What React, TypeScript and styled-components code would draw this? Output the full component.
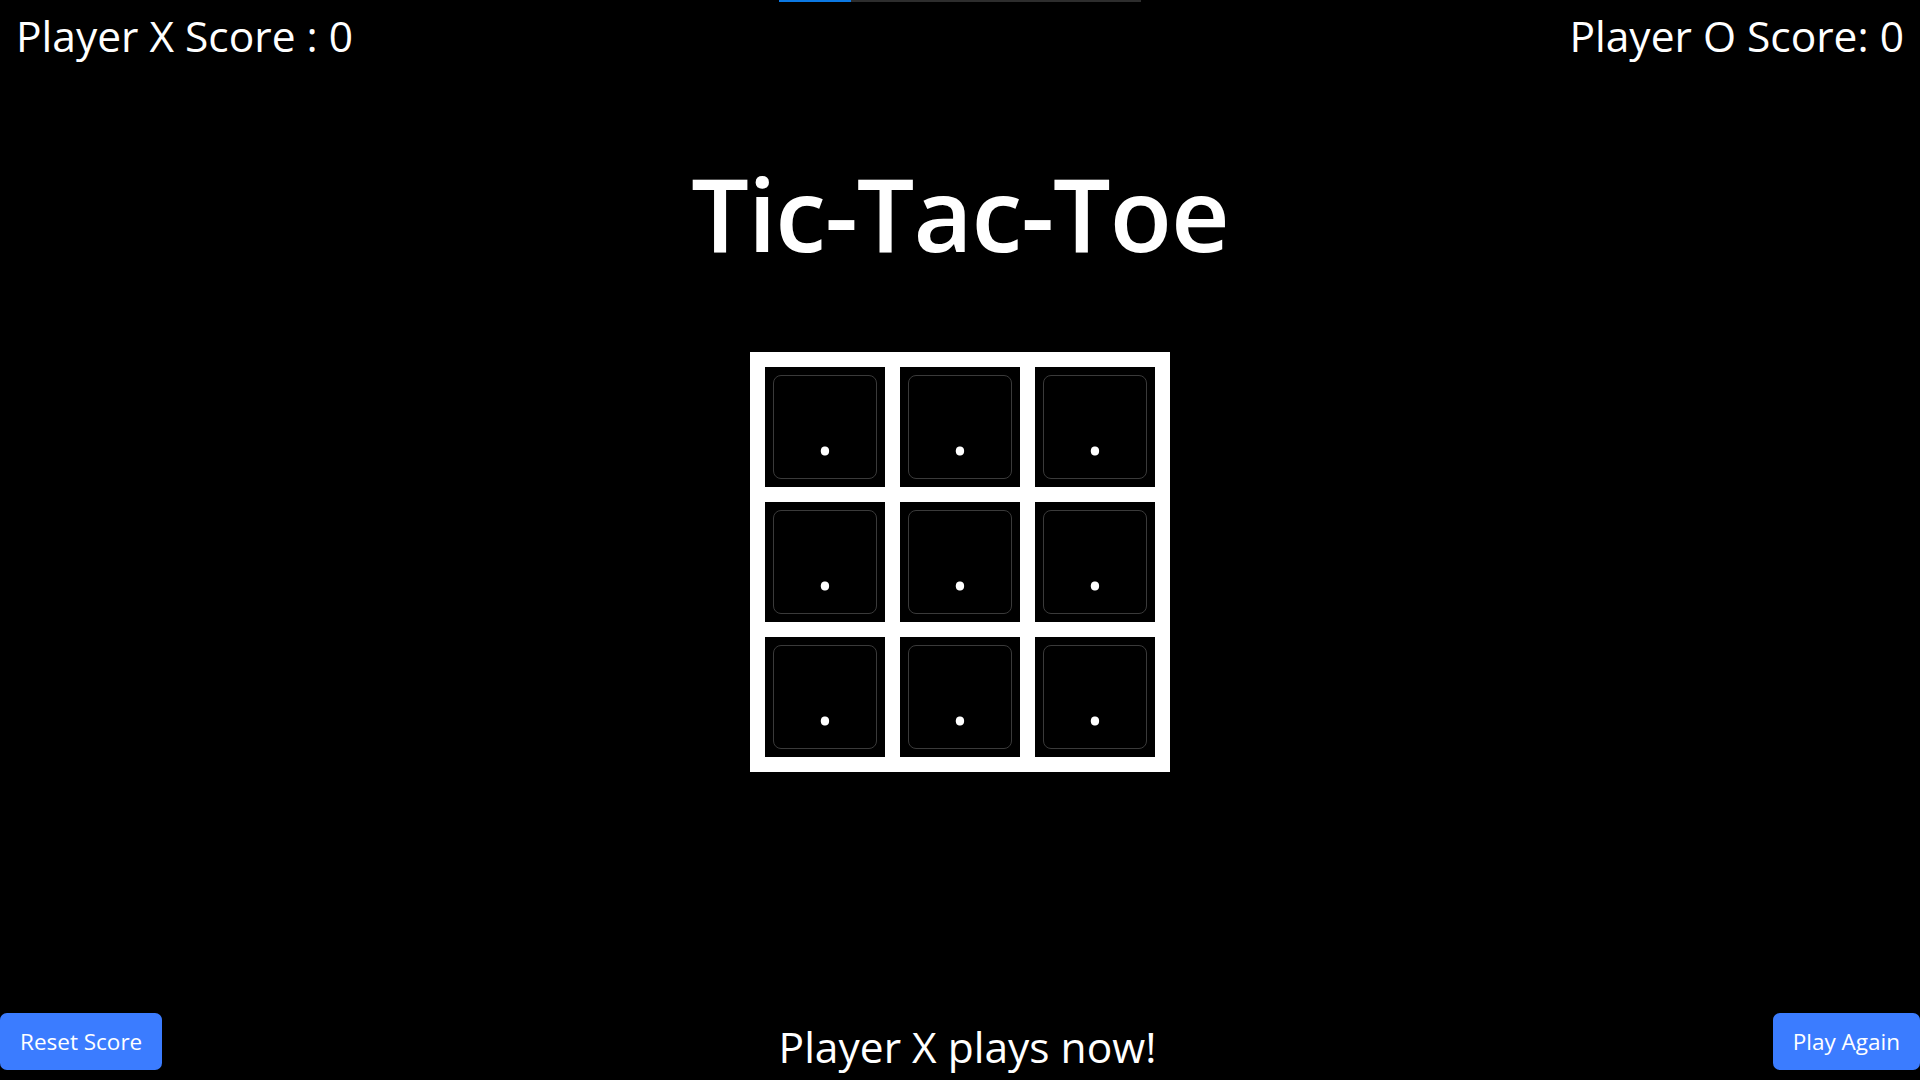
import React, { useState } from "react";
import styled, { createGlobalStyle } from "styled-components";

type Cell = "X" | "O" | null;

export default function App() {
  const [board, setBoard] = useState<Cell[]>(Array(9).fill(null));
  const [turn, setTurn] = useState<"X" | "O">("X");
  const [scores, setScores] = useState({ X: 0, O: 0 });
  const timeLeft = 20;

  const play = (i: number) => {
    if (board[i]) return;
    const next = [...board];
    next[i] = turn;
    setBoard(next);
    setTurn(turn === "X" ? "O" : "X");
  };

  return (
    <>
      <GlobalStyle />
      <Page>
        <TopRow>
          <Score>Player X Score : {scores.X}</Score>
          <Timer>
            <TimerFill style={{ width: `${timeLeft}%` }} />
          </Timer>
          <Score $right>Player O Score: {scores.O}</Score>
        </TopRow>

        <Title>Tic-Tac-Toe</Title>

        <Board>
          {board.map((cell, i) => (
            <Square key={i}>
              <SquareButton onClick={() => play(i)}>{cell ?? "."}</SquareButton>
            </Square>
          ))}
        </Board>

        <BottomRow>
          <ActionButton onClick={() => setScores({ X: 0, O: 0 })}>Reset Score</ActionButton>
          <Status>Player {turn} plays now!</Status>
          <ActionButton onClick={() => setBoard(Array(9).fill(null))}>Play Again</ActionButton>
        </BottomRow>
      </Page>
    </>
  );
}

const GlobalStyle = createGlobalStyle`
  * {
    box-sizing: border-box;
  }
  body, html, #root {
    margin: 0;
    padding: 0;
    height: 100%;
    background: #000;
    color: #fff;
    font-family: "Open Sans", "Noto Sans", sans-serif;
  }
`;

const Page = styled.div`
  display: flex;
  flex-direction: column;
  align-items: center;
  height: 100vh;
  overflow: hidden;
`;

const TopRow = styled.div`
  width: 100%;
  display: grid;
  grid-template-columns: 1fr auto 1fr;
  padding: 0 16px;
`;

const Score = styled.h2<{ $right?: boolean }>`
  margin: 12px 0 0;
  font-size: 42.5px;
  font-weight: 400;
  line-height: 48px;
  white-space: nowrap;
  justify-self: ${({ $right }) => ($right ? "end" : "start")};
`;

const Timer = styled.div`
  width: 362px;
  height: 2px;
  background: #2d2d2d;
  align-self: start;
`;

const TimerFill = styled.div`
  height: 100%;
  background: #0b78e3;
`;

const Title = styled.h1`
  margin: 83px 0 0;
  font-size: 102px;
  font-weight: 600;
  line-height: 140px;
  letter-spacing: -1px;
`;

const Board = styled.div`
  margin-top: 69px;
  width: 420px;
  height: 420px;
  background: #fff;
  padding: 15px;
  display: grid;
  grid-template-columns: repeat(3, 120px);
  grid-template-rows: repeat(3, 120px);
  gap: 15px;
`;

const Square = styled.div`
  background: #000;
  padding: 8px;
`;

const SquareButton = styled.button`
  width: 100%;
  height: 100%;
  background: #000;
  border: 1px solid #3a3a3a;
  border-radius: 8px;
  color: #fff;
  font-family: "Open Sans", sans-serif;
  font-size: 72px;
  line-height: normal;
  padding: 0;
  display: flex;
  align-items: center;
  justify-content: center;
  cursor: pointer;
`;

const BottomRow = styled.div`
  margin-top: auto;
  width: 100%;
  display: flex;
  justify-content: space-between;
  align-items: flex-end;
  padding-bottom: 10px;
`;

const ActionButton = styled.button`
  height: 57px;
  padding: 0 20px;
  background: #3b7cff;
  border: none;
  border-radius: 7px;
  color: #fff;
  font-family: "Open Sans", sans-serif;
  font-size: 22.5px;
  cursor: pointer;
`;

const Status = styled.h2`
  margin: 0;
  font-size: 42.5px;
  font-weight: 400;
  line-height: 47px;
`;
